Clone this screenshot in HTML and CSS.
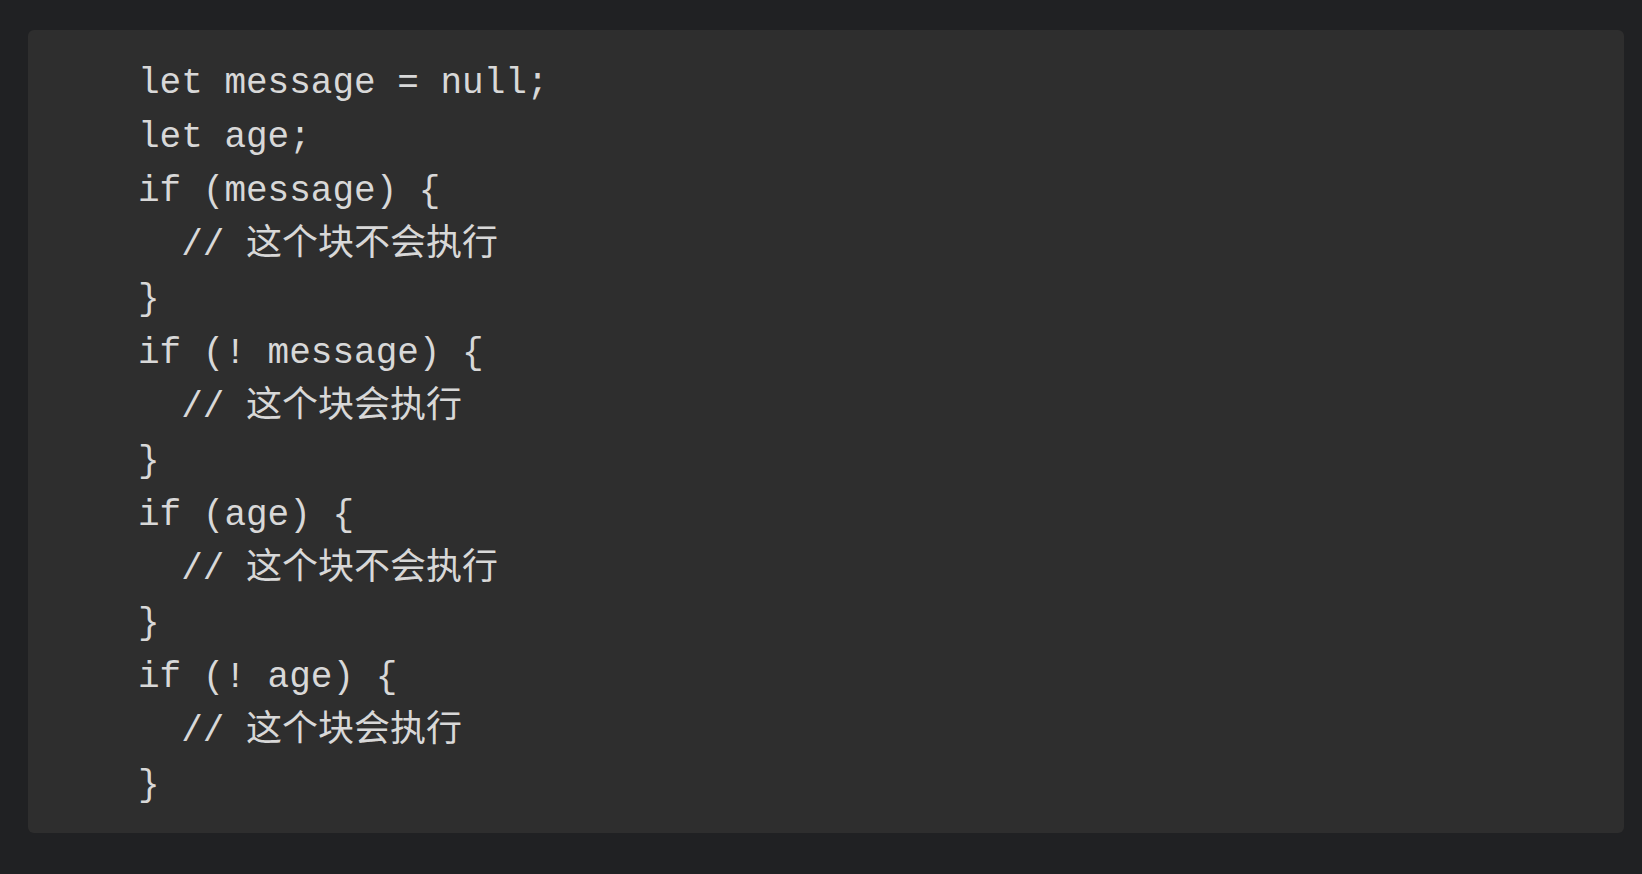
FILE: index.html
```html
<!DOCTYPE html>
<html lang="zh-CN">
<head>
<meta charset="utf-8">
<title>code</title>
<link rel="stylesheet" href="styles.css">
</head>
<body>
<div class="page">
<pre class="code"><code>let message = null;
let age;
if (message) {
  // 这个块不会执行
}
if (! message) {
  // 这个块会执行
}
if (age) {
  // 这个块不会执行
}
if (! age) {
  // 这个块会执行
}</code></pre>
</div>
</body>
</html>
```
FILE: styles.css
```css
html, body {
  margin: 0;
  padding: 0;
  background: #202123;
  height: 100%;
}
.page {
  padding: 30px 18px 0 28px;
}
.code {
  margin: 0;
  background: #2e2e2e;
  border-radius: 6px;
  padding: 27px 20px 20px 110px;
  height: 756px;
  color: #d8d8d8;
  font-family: "Liberation Mono", "Noto Sans CJK SC", monospace;
  font-size: 36px;
  line-height: 54px;
}
.code code {
  font-family: inherit;
}
```
